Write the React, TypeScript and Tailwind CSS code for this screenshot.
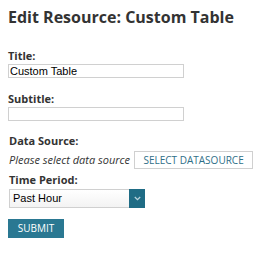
import { useState } from "react";

const sans = "font-['Open_Sans',sans-serif]";
const arial = "font-['Liberation_Sans',Arial,sans-serif]";

export default function App() {
  const [title, setTitle] = useState("Custom Table");
  const [subtitle, setSubtitle] = useState("");
  const [period, setPeriod] = useState("Past Hour");

  return (
    <div className={`w-[271px] h-[257px] bg-white pl-2 pt-[5px] text-[#333] ${sans}`}>
      <h1 className="text-[16px] leading-[24px] font-bold text-[#333]">
        Edit Resource: Custom Table
      </h1>

      <div className="mt-[19px] flex flex-col">
        <label className="text-[11px] leading-[16px] font-bold">Title:</label>
        <input
          value={title}
          onChange={(e) => setTitle(e.target.value)}
          className={`w-[176px] h-[14px] border border-[#d0d0d0] px-[1px] text-[11px] leading-[12px] text-black outline-none ${arial}`}
        />

        <label className="mt-[13px] text-[11px] leading-[16px] font-bold">Subtitle:</label>
        <input
          value={subtitle}
          onChange={(e) => setSubtitle(e.target.value)}
          className={`w-[176px] h-[14px] border border-[#d0d0d0] px-[1px] text-[11px] leading-[12px] text-black outline-none ${arial}`}
        />

        <label className="mt-[12px] pl-[1px] text-[11px] leading-[16px] font-bold">Data Source:</label>
        <div className="mt-[2px] flex items-center gap-[4px] pl-[1px]">
          <span className="text-[11px] leading-[16px] italic text-[#333]">Please select data source</span>
          <button className="w-[119px] h-[18px] border border-[#d0d0d0] bg-white text-[10px] leading-[16px] text-[#2f6f88]">
            SELECT DATASOURCE
          </button>
        </div>

        <label className="mt-[3px] pl-[1px] text-[11px] leading-[16px] font-bold">Time Period:</label>
        <div className="mt-[1px] ml-[1px] flex w-[136px] h-[19px] border border-[#d0d0d0] bg-gradient-to-b from-white to-[#f3f3f3]">
          <div className={`flex-1 pl-[3px] text-[11px] leading-[17px] text-black ${arial}`}>{period}</div>
          <div
            className="w-[16px] -my-[1px] -mr-[1px] bg-[#1f6c85] flex items-center justify-center"
            onClick={() => setPeriod("Past Hour")}
          >
            <svg width="7" height="5" viewBox="0 0 7 5">
              <path d="M0.8 1 L3.5 3.6 L6.2 1" fill="none" stroke="#b9d3dc" strokeWidth="1.3" />
            </svg>
          </div>
        </div>

        <button className="mt-[11px] w-[56px] h-[19px] bg-[#2a7892] text-white text-[10px] leading-[19px]">
          SUBMIT
        </button>
      </div>
    </div>
  );
}
